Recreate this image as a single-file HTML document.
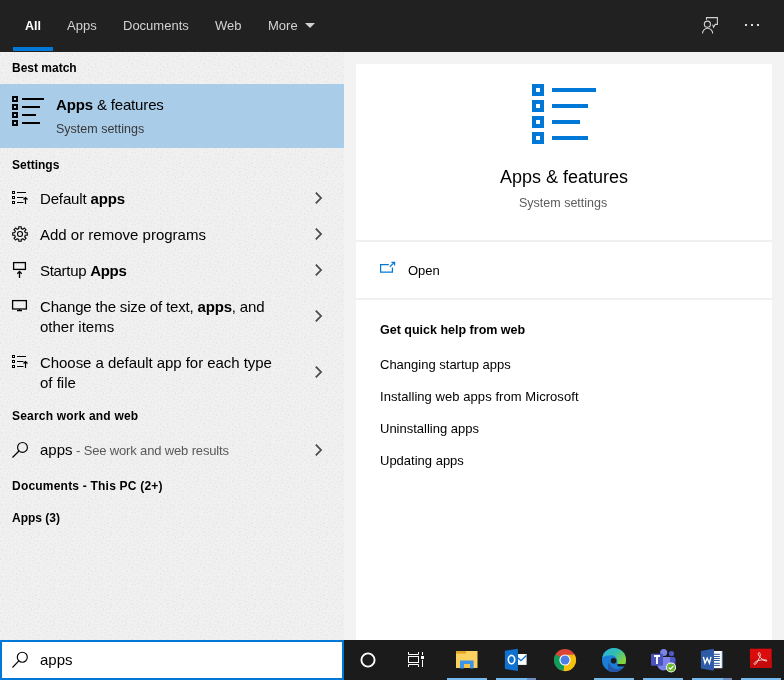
<!DOCTYPE html>
<html><head><meta charset="utf-8">
<style>
*{margin:0;padding:0;box-sizing:border-box}
body{will-change:transform}
html,body{width:784px;height:680px;overflow:hidden;background:#f3f3f3;font-family:"Liberation Sans",sans-serif;color:#000}
.a{position:absolute;white-space:nowrap}
#hdr{position:absolute;left:0;top:0;width:784px;height:52px;background:#212121}
.tab{position:absolute;top:19px;font-size:13px;line-height:13px;color:#d2d2d2}
#left{position:absolute;left:0;top:52px;width:344px;height:588px;background:#f0f0f0;overflow:hidden}
#card{position:absolute;left:356px;top:64px;width:416px;height:576px;background:#fff}
.hd{font-size:12px;line-height:12px;font-weight:bold;color:#000}
.it{font-size:15px;line-height:15px;color:#000}
.ln{font-size:13px;line-height:13px;color:#000}
#tb{position:absolute;left:0;top:640px;width:784px;height:40px;background:#1b1b1b}
#sb{position:absolute;left:0;top:640px;width:344px;height:40px;background:#fff;border:2px solid #0078d7}
.ul{position:absolute;top:38px;height:2px;width:40px;background:#76b9ed}
</style></head><body>
<div id="hdr">
  <div class="tab" style="left:25px;top:20px;color:#fff;font-weight:bold;font-size:12.5px">All</div>
  <div style="position:absolute;left:13px;top:47px;width:40px;height:4px;background:#0078d7"></div>
  <div class="tab" style="left:67px">Apps</div>
  <div class="tab" style="left:123px">Documents</div>
  <div class="tab" style="left:215px">Web</div>
  <div class="tab" style="left:268px">More</div>
  <svg class="a" style="left:305px;top:23px" width="10" height="5"><path d="M0 0H10L5 5Z" fill="#d2d2d2"/></svg>
  <svg class="a" style="left:700px;top:14px" width="22" height="22" viewBox="0 0 22 22" fill="none" stroke="#d2d2d2" stroke-width="1.1">
    <path d="M6.5 5.8V3.6H17.4V10.4H15.2L13.6 13.2L12.6 10.6"/>
    <circle cx="7.4" cy="10.2" r="3.05"/>
    <path d="M2.5 19.4A5.1 5.1 0 0 1 12.7 19.4"/>
  </svg>
  <div style="position:absolute;left:745px;top:24px;width:2px;height:2px;background:#ddd"></div>
  <div style="position:absolute;left:751px;top:24px;width:2px;height:2px;background:#ddd"></div>
  <div style="position:absolute;left:757px;top:24px;width:2px;height:2px;background:#ddd"></div>
</div>

<div id="left">
  <svg class="a" style="left:0;top:0" width="344" height="588"><defs><pattern id="nz" width="36" height="36" patternUnits="userSpaceOnUse"><path d="M0 2h1v1h-1zM5 0h1v1h-1zM7 2h1v1h-1zM10 2h1v1h-1zM14 0h1v1h-1zM17 0h1v1h-1zM19 1h1v1h-1zM23 0h1v1h-1zM24 2h1v1h-1zM28 2h1v1h-1zM32 1h1v1h-1zM34 2h1v1h-1zM0 3h1v1h-1zM5 3h1v1h-1zM8 4h1v1h-1zM11 3h1v1h-1zM14 3h1v1h-1zM15 5h1v1h-1zM18 4h1v1h-1zM21 4h1v1h-1zM25 5h1v1h-1zM29 4h1v1h-1zM32 4h1v1h-1zM34 5h1v1h-1zM2 7h1v1h-1zM3 7h1v1h-1zM6 6h1v1h-1zM9 7h1v1h-1zM12 7h1v1h-1zM17 7h1v1h-1zM20 7h1v1h-1zM22 8h1v1h-1zM25 8h1v1h-1zM28 8h1v1h-1zM32 7h1v1h-1zM35 6h1v1h-1zM1 11h1v1h-1zM3 10h1v1h-1zM8 11h1v1h-1zM11 9h1v1h-1zM14 10h1v1h-1zM17 11h1v1h-1zM20 9h1v1h-1zM23 11h1v1h-1zM24 11h1v1h-1zM29 10h1v1h-1zM31 9h1v1h-1zM33 10h1v1h-1zM2 13h1v1h-1zM3 13h1v1h-1zM6 13h1v1h-1zM9 12h1v1h-1zM13 13h1v1h-1zM16 12h1v1h-1zM18 14h1v1h-1zM23 12h1v1h-1zM25 14h1v1h-1zM29 13h1v1h-1zM32 13h1v1h-1zM35 12h1v1h-1zM0 16h1v1h-1zM3 15h1v1h-1zM6 17h1v1h-1zM11 15h1v1h-1zM12 16h1v1h-1zM16 17h1v1h-1zM19 15h1v1h-1zM23 15h1v1h-1zM25 16h1v1h-1zM28 15h1v1h-1zM31 16h1v1h-1zM34 17h1v1h-1zM1 20h1v1h-1zM5 20h1v1h-1zM8 18h1v1h-1zM11 20h1v1h-1zM13 19h1v1h-1zM17 20h1v1h-1zM20 18h1v1h-1zM22 19h1v1h-1zM25 20h1v1h-1zM28 20h1v1h-1zM31 18h1v1h-1zM34 20h1v1h-1zM1 21h1v1h-1zM4 23h1v1h-1zM8 23h1v1h-1zM9 21h1v1h-1zM14 23h1v1h-1zM16 22h1v1h-1zM19 23h1v1h-1zM22 23h1v1h-1zM26 22h1v1h-1zM29 22h1v1h-1zM30 23h1v1h-1zM33 23h1v1h-1zM0 25h1v1h-1zM4 26h1v1h-1zM7 25h1v1h-1zM11 26h1v1h-1zM13 24h1v1h-1zM16 24h1v1h-1zM19 25h1v1h-1zM23 25h1v1h-1zM25 25h1v1h-1zM27 24h1v1h-1zM32 26h1v1h-1zM35 24h1v1h-1zM1 29h1v1h-1zM3 29h1v1h-1zM7 27h1v1h-1zM10 27h1v1h-1zM14 28h1v1h-1zM17 29h1v1h-1zM18 27h1v1h-1zM23 28h1v1h-1zM25 29h1v1h-1zM27 28h1v1h-1zM30 27h1v1h-1zM34 29h1v1h-1zM2 30h1v1h-1zM5 31h1v1h-1zM7 30h1v1h-1zM9 30h1v1h-1zM14 30h1v1h-1zM16 32h1v1h-1zM18 31h1v1h-1zM22 32h1v1h-1zM24 32h1v1h-1zM28 32h1v1h-1zM30 31h1v1h-1zM34 32h1v1h-1zM1 34h1v1h-1zM4 35h1v1h-1zM7 34h1v1h-1zM10 35h1v1h-1zM13 33h1v1h-1zM16 33h1v1h-1zM18 33h1v1h-1zM22 35h1v1h-1zM26 34h1v1h-1zM29 35h1v1h-1zM30 33h1v1h-1zM35 34h1v1h-1z" fill="#e5e5e5"/></pattern></defs><rect width="344" height="588" fill="url(#nz)"/></svg>
</div>
<div id="lc" style="position:absolute;left:0;top:0;width:344px;height:640px">
  <div class="a hd" style="left:12px;top:62px">Best match</div>
  <div style="position:absolute;left:0;top:84px;width:344px;height:64px;background:#a9cce9"></div>
  <svg class="a" style="left:0;top:84px" width="50" height="64" fill="none" stroke="#000" stroke-width="2">
    <rect x="13" y="13" width="4" height="4"/><rect x="13" y="21" width="4" height="4"/><rect x="13" y="29" width="4" height="4"/><rect x="13" y="37" width="4" height="4"/>
    <path d="M22 15H44M22 23H40M22 31H36M22 39H40"/>
  </svg>
  <div class="a it" style="left:56px;top:97.3px;letter-spacing:-0.16px"><b>Apps</b> &amp; features</div>
  <div class="a" style="left:56px;top:122.6px;font-size:12.5px;line-height:12.5px;color:#383838">System settings</div>

  <div class="a hd" style="left:12px;top:158.6px">Settings</div>

  <div class="a it" style="left:40px;top:191px;letter-spacing:-0.15px">Default <b>apps</b></div>
  <div class="a it" style="left:40px;top:227px">Add or remove programs</div>
  <div class="a it" style="left:40px;top:263px;letter-spacing:-0.3px">Startup <b>Apps</b></div>
  <div class="a it" style="left:40px;top:299px;letter-spacing:-0.17px">Change the size of text, <b>apps</b>, and</div>
  <div class="a it" style="left:40px;top:319px">other items</div>
  <div class="a it" style="left:40px;top:355px;letter-spacing:-0.05px">Choose a default app for each type</div>
  <div class="a it" style="left:40px;top:375px">of file</div>

  <div class="a hd" style="left:12px;top:410.4px;letter-spacing:0.19px">Search work and web</div>
  <div class="a it" style="left:40px;top:441.7px">apps<span style="font-size:13px;color:#595959;letter-spacing:-0.15px"> - See work and web results</span></div>
  <div class="a hd" style="left:12px;top:479.7px;letter-spacing:0.21px">Documents - This PC (2+)</div>
  <div class="a hd" style="left:12px;top:511.6px">Apps (3)</div>

  <!-- icons -->
  <svg class="a" style="left:0;top:180px" width="40" height="300" fill="none" stroke="#000">
    <!-- default apps -->
    <g stroke-width="1"><rect x="12.5" y="11.5" width="2" height="2"/><rect x="12.5" y="16.5" width="2" height="2"/><rect x="12.5" y="21.5" width="2" height="2"/></g>
    <path d="M17 12.5H26M17 17.5H23.5M17 22.5H23.5M25.5 17.5V24M23.5 19.5L25.5 17.5L27.5 19.5" stroke-width="1.2"/>
    <!-- gear -->
    <g transform="translate(20,54)" stroke-width="1.1">
      <circle r="2.5"/>
      <path d="M-1.24 -5.36L-1.22 -7.30L1.22 -7.30L1.24 -5.36A5.5 5.5 0 0 1 2.91 -4.66L4.30 -6.02L6.02 -4.30L4.66 -2.91A5.5 5.5 0 0 1 5.36 -1.24L7.30 -1.22L7.30 1.22L5.36 1.24A5.5 5.5 0 0 1 4.66 2.91L6.02 4.30L4.30 6.02L2.91 4.66A5.5 5.5 0 0 1 1.24 5.36L1.22 7.30L-1.22 7.30L-1.24 5.36A5.5 5.5 0 0 1 -2.91 4.66L-4.30 6.02L-6.02 4.30L-4.66 2.91A5.5 5.5 0 0 1 -5.36 1.24L-7.30 1.22L-7.30 -1.22L-5.36 -1.24A5.5 5.5 0 0 1 -4.66 -2.91L-6.02 -4.30L-4.30 -6.02L-2.91 -4.66A5.5 5.5 0 0 1 -1.24 -5.36Z"/>
    </g>
    <!-- startup -->
    <g stroke-width="1.3"><rect x="13.6" y="82.6" width="11.8" height="6.8"/><path d="M19.5 91.5V98M17.3 93.7L19.5 91.5L21.7 93.7"/></g>
    <!-- monitor -->
    <g stroke-width="1.3"><rect x="12.6" y="120.6" width="13.8" height="8.4"/><path d="M19.5 129V130M17 130.6H22"/></g>
    <!-- choose default -->
    <g stroke-width="1"><rect x="12.5" y="175.5" width="2" height="2"/><rect x="12.5" y="180.5" width="2" height="2"/><rect x="12.5" y="185.5" width="2" height="2"/></g>
    <path d="M17 176.5H26M17 181.5H23.5M17 186.5H23.5M25.5 181.5V188M23.5 183.5L25.5 181.5L27.5 183.5" stroke-width="1.2"/>
    <!-- search -->
    <g stroke-width="1.15"><circle cx="22.5" cy="267.4" r="4.9"/><path d="M19 271L12.5 277.5"/></g>
  </svg>
  <!-- chevrons -->
  <svg class="a" style="left:300px;top:180px" width="40" height="300" fill="none" stroke="#4a4a4a" stroke-width="1.8">
    <path d="M15.8 12.6L21 18L15.8 23.4"/>
    <path d="M15.8 48.6L21 54L15.8 59.4"/>
    <path d="M15.8 84.6L21 90L15.8 95.4"/>
    <path d="M15.8 130.6L21 136L15.8 141.4"/>
    <path d="M15.8 186.6L21 192L15.8 197.4"/>
    <path d="M15.8 264.6L21 270L15.8 275.4"/>
  </svg>
</div>

<div id="card">
  <svg class="a" style="left:176px;top:20px" width="64" height="60" fill="#0078d7">
    <path d="M0 0h12v12H0zM4 4v4h4V4z M0 16h12v12H0zM4 20v4h4v-4z M0 32h12v12H0zM4 36v4h4v-4z M0 48h12v12H0zM4 52v4h4v-4z" fill-rule="evenodd"/>
    <rect x="20" y="4" width="44" height="4"/><rect x="20" y="20" width="36" height="4"/><rect x="20" y="36" width="28" height="4"/><rect x="20" y="52" width="36" height="4"/>
  </svg>
  <div class="a" style="left:144px;top:104.4px;font-size:18px;line-height:18px">Apps &amp; features</div>
  <div class="a" style="left:163px;top:133px;font-size:12.5px;line-height:12.5px;color:#5c5c5c">System settings</div>
  <div style="position:absolute;left:0;top:176px;width:416px;height:2px;background:#f0f0f0"></div>
  <svg class="a" style="left:22px;top:196px" width="20" height="16" fill="none" stroke="#0078d7" stroke-width="1.2">
    <path d="M10.8 4.7H2.6V12.1H14.4V7.6"/><path d="M11.8 6.8L16.2 2.6M13.4 2.4H16.6V5.6"/>
  </svg>
  <div class="a ln" style="left:52px;top:199.6px">Open</div>
  <div style="position:absolute;left:0;top:234px;width:416px;height:2px;background:#f0f0f0"></div>
  <div class="a" style="left:24px;top:260.4px;font-size:12.5px;line-height:12.5px;font-weight:bold">Get quick help from web</div>
  <div class="a ln" style="left:24px;top:293.6px">Changing startup apps</div>
  <div class="a ln" style="left:24px;top:325.6px;letter-spacing:0.06px">Installing web apps from Microsoft</div>
  <div class="a ln" style="left:24px;top:357.6px">Uninstalling apps</div>
  <div class="a ln" style="left:24px;top:389.6px">Updating apps</div>
</div>

<div id="tb">
  <svg class="a" style="left:344px;top:0" width="440" height="40">
    <circle cx="24" cy="20" r="6.6" fill="none" stroke="#fff" stroke-width="1.9"/>
    <g fill="none" stroke="#fff" stroke-width="1">
      <path d="M64.5 12V14.5H74.5V12"/><rect x="64.5" y="16.5" width="10" height="6"/><path d="M64.5 27V24.5H74.5V27"/>
      <path d="M78.5 12V15M78.5 20V27"/>
    </g>
    <rect x="77" y="16" width="3" height="3" fill="#fff"/>
    <!-- explorer -->
    <rect x="112" y="11" width="21.5" height="17" fill="#fbd160"/>
    <rect x="112" y="11" width="10" height="2.6" fill="#e5a528"/>
    <path d="M116 28.6V20.4H129.6V28.6H126V24H120V28.6Z" fill="#3c95e6"/>
    <rect x="120" y="24" width="6" height="4" fill="#f3c64a"/>
    <!-- outlook -->
    <path d="M160.9 10.8L173.9 8.7V31L160.9 28.9Z" fill="#0f72d0"/>
    <ellipse cx="167.5" cy="19.6" rx="3.2" ry="4.2" fill="none" stroke="#fff" stroke-width="1.6"/>
    <rect x="174" y="14" width="8.6" height="10.9" fill="#fff"/>
    <path d="M174 18L177 20.7L182.4 15.5" fill="none" stroke="#0f72d0" stroke-width="1.3"/>
    <!-- chrome -->
    <g transform="translate(221,20)">
      <circle r="11" fill="#db4437"/>
      <path d="M0 0L-9.53 5.5A11 11 0 0 1 -9.53 -5.5Z" fill="#0f9d58"/>
      <path d="M-9.53 -5.5L0 0L-1.5 11A11 11 0 0 1 -9.53 5.5Z" fill="#0f9d58"/>
      <path d="M0 0L9.53 -5.5A11 11 0 0 1 -1.5 11Z" fill="#f4c20d"/>
      <path d="M0 -5L9.53 -5.5L9.53 -5.5L0 0Z" fill="#f4c20d"/>
      <circle r="5.6" fill="#fff"/>
      <circle r="4.5" fill="#4d7ee8"/>
    </g>
    <!-- edge -->
    <g transform="translate(270,20)">
      <defs>
        <linearGradient id="eg1" x1="0" y1="0" x2="1" y2="0.6"><stop offset="0" stop-color="#2cb0ea"/><stop offset="0.55" stop-color="#30bdb0"/><stop offset="1" stop-color="#86d23a"/></linearGradient>
        <clipPath id="ec"><circle r="12"/></clipPath>
      </defs>
      <g clip-path="url(#ec)">
        <rect x="-12" y="-12" width="24" height="24" fill="#1a7ed8"/>
        <path d="M-13 -13H13V4H3.5C3.5 1 3 -4 -1 -4.6C-5 -5.2 -9 -4 -13 -2Z" fill="url(#eg1)"/>
        <path d="M3.5 4H13V7.5C10 6 6 6.8 3.5 6.5Z" fill="#1b1b1b"/>
        <path d="M-5 2C-4 8 2 10 6 8.5C9 7.5 11 6.5 13 7.5V13H-6C-6 8 -6 4 -5 2Z" fill="#2557a8"/>
      </g>
      <circle cx="-0.4" cy="0.8" r="2.8" fill="#1b1b1b"/>
    </g>
    <!-- teams -->
    <g>
      <circle cx="327.5" cy="13.6" r="2.6" fill="#5059c9"/>
      <rect x="316" y="17" width="15.5" height="12.5" rx="2" fill="#5059c9"/>
      <circle cx="319.7" cy="12.4" r="3.5" fill="#7b83eb"/>
      <path d="M313 17H326V24A6.5 6.5 0 0 1 313 24Z" fill="#7b83eb"/>
      <rect x="307" y="13.8" width="12" height="12" rx="1" fill="#4b53bc"/>
      <path d="M310 16H316M313 16V24" stroke="#fff" stroke-width="1.9" fill="none"/>
      <circle cx="327" cy="27.5" r="5" fill="#fff"/>
      <circle cx="327" cy="27.5" r="4.1" fill="#6bb92c"/>
      <path d="M324.8 27.6L326.4 29.1L329.3 26" stroke="#fff" stroke-width="1.2" fill="none"/>
    </g>
    <!-- word -->
    <rect x="369.5" y="11" width="9" height="17.2" fill="#fff"/>
    <path d="M370 14.3H375.8M370 16.5H375.8M370 18.5H375.8M370 20.5H375.8M370 23.3H375.8M370 25.4H375.8" stroke="#2b579a" stroke-width="1"/>
    <path d="M378.3 11V28.2" stroke="#2b579a" stroke-width="0.8"/>
    <path d="M356.9 11L369.9 8.7V30.8L356.9 28.5Z" fill="#2e5ba8"/>
    <path d="M359.4 16.8L361 23.2L363.2 18.2L365.4 23.2L367 16.8" fill="none" stroke="#fff" stroke-width="1.4"/>
    <!-- acrobat -->
    <rect x="406" y="8.7" width="21.6" height="19.3" fill="#dd0c0c"/>
    <rect x="406" y="19" width="21.6" height="9" fill="#c70a0a"/>
    <path d="M414.2 13.3C416 11.5 417.2 14.5 415.5 17.5C414 20.5 412 25 410.5 24.5C409 24 411 21.5 414.5 20.5C418 19.5 422 19.5 423 20.5C423.5 21.5 420 21 418 19C416 17 414 15.5 414.2 13.3Z" fill="none" stroke="#f4e6e6" stroke-width="0.9"/>
  </svg>
  <div class="ul" style="left:447px"></div>
  <div class="ul" style="left:496px;width:31px"></div><div class="ul" style="left:527px;width:9px;background:#6b8cc0"></div>
  <div class="ul" style="left:594px"></div>
  <div class="ul" style="left:643px"></div>
  <div class="ul" style="left:692px;width:31px"></div><div class="ul" style="left:723px;width:9px;background:#6b8cc0"></div>
  <div class="ul" style="left:741px"></div>
</div>
<div id="sb">
  <svg class="a" style="left:6px;top:6px" width="24" height="24" fill="none" stroke="#000" stroke-width="1.15">
    <circle cx="14.3" cy="9.2" r="5"/><path d="M10.8 12.8L4.5 19.5"/>
  </svg>
  <div class="a it" style="left:38px;top:10px">apps</div>
</div>
</body></html>
